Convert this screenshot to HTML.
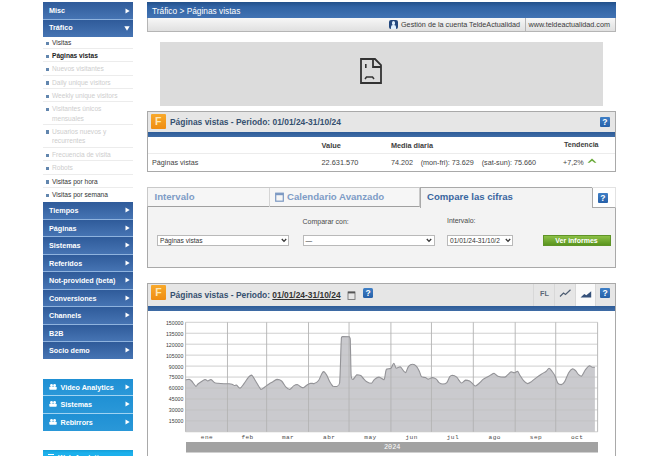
<!DOCTYPE html>
<html><head><meta charset="utf-8">
<style>
*{margin:0;padding:0;box-sizing:border-box}
html,body{width:670px;height:456px;overflow:hidden;background:#fff;font-family:"Liberation Sans",sans-serif;position:relative}
.a{position:absolute}
.t{position:absolute;white-space:nowrap;line-height:1}
/* sidebar */
.mh{position:absolute;left:43px;width:90px;background:linear-gradient(#2f5b9a,#4674b3);color:#fff;font-weight:bold;font-size:7.2px;line-height:1}
.mh span{position:absolute;left:6px;top:50%;transform:translateY(-40%)}
.arr{position:absolute;right:3.5px;top:50%;margin-top:-3px}
.sub{position:absolute;left:43px;width:90px;border-bottom:1px solid #ececec;font-size:6.6px;line-height:9.5px;color:#333}
.sub i{position:absolute;left:2.5px;width:3.5px;height:3.5px;background:#6286ae}
.sub span{position:absolute;left:9px;top:2px;white-space:nowrap}
.sub.d{color:#cdcdcd}
.cy{position:absolute;left:43px;width:90px;background:linear-gradient(#1f90d4,#2a98d8);color:#fff;font-weight:bold;font-size:7.2px;line-height:1}
.yl{left:150px;width:33.3px;text-align:right;font-family:"Liberation Sans",sans-serif;font-size:5.2px;color:#3a3a3a;transform:scaleY(1.2)}
.ml{top:435.3px;width:20px;text-align:center;font-family:"Liberation Mono",monospace;font-size:6.1px;letter-spacing:0.45px;color:#4a4a4a}
.cy span{position:absolute;left:17.5px;top:50%;transform:translateY(-40%)}
</style></head><body>

<!-- SIDEBAR -->
<div class="mh" style="top:2px;height:17px"><span style="transform:translateY(-58%)">Misc</span><svg class="arr" width="5" height="6" viewBox="0 0 5 6"><path d="M0.5 0.5 L4.7 3 L0.5 5.5Z" fill="#fff"/></svg></div>
<div class="a" style="left:43px;top:19px;width:90px;height:1px;background:#8fb3de"></div>
<div class="mh" style="top:20px;height:16.5px"><span style="transform:translateY(-58%)">Tráfico</span><svg class="arr" style="right:3.5px;margin-top:-2.5px" width="6" height="5" viewBox="0 0 6 5"><path d="M0.3 0.3 H5.7 L3 4.7Z" fill="#fff"/></svg></div>

<div class="sub" style="top:36px;height:13px"><i style="top:5.6px"></i><span>Visitas</span></div>
<div class="sub" style="top:49px;height:13px;font-weight:bold;color:#222"><i style="top:5.6px"></i><span>Páginas vistas</span></div>
<div class="sub d" style="top:62px;height:13.5px"><i style="top:5.6px"></i><span>Nuevos visitantes</span></div>
<div class="sub d" style="top:75.5px;height:13.5px"><i style="top:5.6px"></i><span>Daily unique visitors</span></div>
<div class="sub d" style="top:89px;height:13px"><i style="top:5.6px"></i><span>Weekly unique visitors</span></div>
<div class="sub d" style="top:102px;height:22.5px"><i style="top:5.6px"></i><span>Visitantes únicos<br>mensuales</span></div>
<div class="sub d" style="top:124.5px;height:23.5px"><i style="top:5.6px"></i><span>Usuarios nuevos y<br>recurrentes</span></div>
<div class="sub d" style="top:148px;height:13px"><i style="top:5.6px"></i><span>Frecuencia de visita</span></div>
<div class="sub d" style="top:161px;height:13.5px"><i style="top:5.6px"></i><span>Robots</span></div>
<div class="sub" style="top:174.5px;height:13.5px"><i style="top:5.6px"></i><span>Visitas por hora</span></div>
<div class="sub" style="top:188px;height:14px;border-bottom:0"><i style="top:5.6px"></i><span>Visitas por semana</span></div>

<div class="a" style="left:43px;top:202px;width:90px;height:156.6px;background:#8fb3de"></div>
<div class="mh" style="top:202.0px;height:16.5px"><span>Tiempos</span><svg class="arr" width="5" height="6" viewBox="0 0 5 6"><path d="M0.5 0.5 L4.7 3 L0.5 5.5Z" fill="#fff"/></svg></div>
<div class="mh" style="top:219.5px;height:16.5px"><span>Páginas</span><svg class="arr" width="5" height="6" viewBox="0 0 5 6"><path d="M0.5 0.5 L4.7 3 L0.5 5.5Z" fill="#fff"/></svg></div>
<div class="mh" style="top:237.0px;height:16.5px"><span>Sistemas</span><svg class="arr" width="5" height="6" viewBox="0 0 5 6"><path d="M0.5 0.5 L4.7 3 L0.5 5.5Z" fill="#fff"/></svg></div>
<div class="mh" style="top:254.5px;height:16.5px"><span>Referidos</span><svg class="arr" width="5" height="6" viewBox="0 0 5 6"><path d="M0.5 0.5 L4.7 3 L0.5 5.5Z" fill="#fff"/></svg></div>
<div class="mh" style="top:272.0px;height:16.5px"><span>Not-provided (beta)</span><svg class="arr" width="5" height="6" viewBox="0 0 5 6"><path d="M0.5 0.5 L4.7 3 L0.5 5.5Z" fill="#fff"/></svg></div>
<div class="mh" style="top:289.5px;height:16.5px"><span>Conversiones</span><svg class="arr" width="5" height="6" viewBox="0 0 5 6"><path d="M0.5 0.5 L4.7 3 L0.5 5.5Z" fill="#fff"/></svg></div>
<div class="mh" style="top:307.0px;height:16.5px"><span>Channels</span><svg class="arr" width="5" height="6" viewBox="0 0 5 6"><path d="M0.5 0.5 L4.7 3 L0.5 5.5Z" fill="#fff"/></svg></div>
<div class="mh" style="top:324.5px;height:16.5px"><span>B2B</span></div>
<div class="mh" style="top:342.0px;height:16.6px"><span>Socio demo</span><svg class="arr" width="5" height="6" viewBox="0 0 5 6"><path d="M0.5 0.5 L4.7 3 L0.5 5.5Z" fill="#fff"/></svg></div>

<div class="a" style="left:43px;top:378.5px;width:90px;height:52.5px;background:#9fd3f2"></div>
<div class="cy" style="top:378.5px;height:16.5px"><svg style="position:absolute;left:6px;top:50%;margin-top:-3.2px" width="8" height="6" viewBox="0 0 8 6"><circle cx="2.5" cy="1.5" r="1.4" fill="#fff"/><circle cx="5.6" cy="1.5" r="1.4" fill="#fff"/><rect x="0.3" y="2.8" width="7.4" height="3" rx="0.8" fill="#fff"/></svg><span>Video Analytics</span><svg class="arr" width="5" height="6" viewBox="0 0 5 6"><path d="M0.5 0.5 L4.7 3 L0.5 5.5Z" fill="#fff"/></svg></div>
<div class="cy" style="top:396px;height:16.5px"><svg style="position:absolute;left:6px;top:50%;margin-top:-3.2px" width="8" height="6" viewBox="0 0 8 6"><circle cx="2.5" cy="1.5" r="1.4" fill="#fff"/><circle cx="5.6" cy="1.5" r="1.4" fill="#fff"/><rect x="0.3" y="2.8" width="7.4" height="3" rx="0.8" fill="#fff"/></svg><span>Sistemas</span><svg class="arr" width="5" height="6" viewBox="0 0 5 6"><path d="M0.5 0.5 L4.7 3 L0.5 5.5Z" fill="#fff"/></svg></div>
<div class="cy" style="top:413.5px;height:17.5px"><svg style="position:absolute;left:6px;top:50%;margin-top:-3.2px" width="8" height="6" viewBox="0 0 8 6"><circle cx="2.5" cy="1.5" r="1.4" fill="#fff"/><circle cx="5.6" cy="1.5" r="1.4" fill="#fff"/><rect x="0.3" y="2.8" width="7.4" height="3" rx="0.8" fill="#fff"/></svg><span>Rebirrors</span><svg class="arr" width="5" height="6" viewBox="0 0 5 6"><path d="M0.5 0.5 L4.7 3 L0.5 5.5Z" fill="#fff"/></svg></div>
<div class="a" style="left:43px;top:450px;width:90px;height:10px;background:linear-gradient(#159fd8,#1cb0ec 30%)"></div><div class="a" style="left:48px;top:454px;width:6px;height:1.2px;background:#fff"></div><div class="t" style="left:58px;top:454.3px;font-size:7.2px;font-weight:bold;color:#fff">Web Analytics</div>


<!-- MAIN HEADER -->
<div class="a" style="left:147px;top:2px;width:469px;height:16px;background:linear-gradient(#22508a 0%,#3163a4 30%,#4273b3 100%)"></div>
<div class="t" style="left:152px;top:6.8px;font-size:8.34px;color:#fff">Tráfico &gt; Páginas vistas</div>
<div class="a" style="left:147px;top:18px;width:469px;height:14px;background:linear-gradient(#f7f7f7,#e0e0e0);border:1px solid #b5b5b5;border-top:0"></div>
<div class="a" style="left:388.5px;top:20px;width:9.5px;height:9px;background:#23487f;border-radius:2px"></div>
<div class="a" style="left:391.5px;top:21px;width:3.5px;height:3.5px;background:#dff0ff;border-radius:50%"></div>
<div class="a" style="left:390.5px;top:24.5px;width:5.5px;height:4.5px;background:#dff0ff;border-radius:2px 2px 0 0"></div>
<div class="t" style="left:401px;top:21.3px;font-size:7.22px;color:#3a3a3a">Gestión de la cuenta TeldeActualidad</div>
<div class="a" style="left:525px;top:18px;width:1px;height:14px;background:#b5b5b5"></div>
<div class="t" style="left:528.5px;top:21.3px;font-size:7.22px;color:#3a3a3a">www.teldeactualidad.com</div>

<!-- PLACEHOLDER -->
<div class="a" style="left:160px;top:41.5px;width:443px;height:64px;background:#dcdcdc"></div>
<svg class="a" style="left:355px;top:54px" width="32" height="34" viewBox="0 0 32 34">
<path d="M6 5 H20 L26 11 V29 H6 Z" fill="none" stroke="#333" stroke-width="1.8"/>
<path d="M18 5 V13 H26" fill="none" stroke="#333" stroke-width="1.8"/>
<rect x="10" y="10" width="1.6" height="4" fill="#333"/>
<path d="M10 25 L11.5 23 H17.5 L19 25" fill="none" stroke="#333" stroke-width="1.5"/>
</svg>


<!-- SUMMARY BOX -->
<div class="a" style="left:147px;top:111px;width:469px;height:61px;border:1px solid #a9a9a9;background:#fff"></div>
<div class="a" style="left:148px;top:112px;width:467px;height:20px;background:#e6e6e6"></div>
<div class="a" style="left:148px;top:132px;width:467px;height:4.5px;background:linear-gradient(#2e5c98,#3f6ca6)"></div>
<div class="a" style="left:150.5px;top:113.5px;width:15.5px;height:15px;background:linear-gradient(#f8a92c,#ef8d12);border-radius:1px"></div>
<div class="t" style="left:155px;top:116px;font-size:10.5px;font-weight:bold;color:#ffe7b5">F</div>
<div class="t" style="left:170px;top:117.5px;font-size:8.43px;font-weight:bold;color:#35506f">Páginas vistas - Periodo: 01/01/24-31/10/24</div>
<div class="a" style="left:600px;top:116.5px;width:10px;height:10px;background:linear-gradient(#3f7fc6,#2660a8);border-radius:1px"></div>
<div class="t" style="left:602.3px;top:117.6px;font-size:8.5px;font-weight:bold;color:#fff">?</div>
<div class="t" style="left:321.5px;top:141.8px;font-size:7.4px;font-weight:bold;color:#3d3d3d">Value</div>
<div class="t" style="left:391px;top:141.6px;font-size:7.27px;font-weight:bold;color:#3d3d3d">Media diaria</div>
<div class="t" style="left:564px;top:142px;font-size:7.1px;font-weight:bold;color:#3d3d3d">Tendencia</div>
<div class="a" style="left:148px;top:153px;width:467px;height:1px;background:#ececec"></div>
<div class="t" style="left:152px;top:159.2px;font-size:7.2px;color:#444">Páginas vistas</div>
<div class="t" style="left:321.5px;top:159.2px;font-size:7.37px;color:#444">22.631.570</div>
<div class="t" style="left:391px;top:159.2px;font-size:7.2px;color:#444">74.202</div>
<div class="t" style="left:420.7px;top:159.2px;font-size:7.2px;color:#444">(mon-fri): 73.629</div>
<div class="t" style="left:481.7px;top:159.2px;font-size:7.2px;color:#444">(sat-sun): 75.660</div>
<div class="t" style="left:563px;top:159.2px;font-size:7.2px;color:#444">+7,2%</div>
<svg class="a" style="left:586.5px;top:158.3px" width="10" height="5" viewBox="0 0 10 5"><path d="M0.5 4.8 L5 0.6 L9.5 4.8 L7.5 4.8 L5 2.8 L2.5 4.8Z" fill="#6bab3c"/></svg>

<!-- TABS BOX -->
<div class="a" style="left:147px;top:207px;width:469px;height:61px;border:1px solid #a9a9a9;border-top:0;background:#f3f3f3"></div>
<div class="a" style="left:147px;top:187px;width:273px;height:20px;border:1px solid #c9c9c9;border-bottom:1px solid #a0a0a0;background:#f6f6f6"></div>
<div class="a" style="left:268.5px;top:188px;width:1px;height:19px;background:#d5d5d5"></div>
<div class="t" style="left:154.5px;top:191.8px;font-size:9.6px;font-weight:bold;color:#7e9cc6">Intervalo</div>
<svg class="a" style="left:274.5px;top:191.5px" width="9" height="10" viewBox="0 0 9 10"><rect x="0.7" y="1.2" width="7.6" height="8" fill="none" stroke="#7b98c2" stroke-width="1.2"/><rect x="0.7" y="1.2" width="7.6" height="2" fill="#7b98c2"/></svg>
<div class="t" style="left:287px;top:191.8px;font-size:9.64px;font-weight:bold;color:#7e9cc6">Calendario Avanzado</div>
<div class="a" style="left:420px;top:187px;width:173px;height:21px;border:1px solid #a9a9a9;border-bottom:0;background:#f3f3f3"></div>
<div class="t" style="left:427px;top:191.8px;font-size:9.6px;font-weight:bold;color:#3a66a0">Compare las cifras</div>
<div class="a" style="left:592px;top:187px;width:24px;height:21px;border:1px solid #e2e2e2;border-left:0;border-bottom:1px solid #a9a9a9"></div>
<div class="a" style="left:598px;top:192.8px;width:10px;height:10px;background:linear-gradient(#3f7fc6,#2660a8);border-radius:1px"></div>
<div class="t" style="left:600.3px;top:193.5px;font-size:8.5px;font-weight:bold;color:#fff">?</div>
<div class="t" style="left:302.5px;top:218.1px;font-size:7px;color:#4a4a4a">Comparar con:</div>
<div class="t" style="left:447px;top:218.1px;font-size:6.93px;color:#4a4a4a">Intervalo:</div>
<div class="a sel" style="left:157px;top:235px;width:132px;height:11px;border:1px solid #b9b9b9;background:#fff"></div>
<div class="t" style="left:160px;top:237.5px;font-size:6.6px;color:#333">Páginas vistas</div>
<div class="a sel" style="left:302.5px;top:235px;width:132px;height:11px;border:1px solid #b9b9b9;background:#fff"></div>
<div class="t" style="left:305.5px;top:237.5px;font-size:6.6px;color:#333">—</div>
<div class="a sel" style="left:447px;top:235px;width:66px;height:11px;border:1px solid #b9b9b9;background:#fff"></div>
<div class="t" style="left:450px;top:237.5px;font-size:6.6px;color:#333">01/01/24-31/10/2</div>
<svg class="a" style="left:281px;top:238px" width="6" height="5" viewBox="0 0 6 5"><path d="M0.8 1 L3 3.4 L5.2 1" fill="none" stroke="#333" stroke-width="1.3"/></svg>
<svg class="a" style="left:426px;top:238px" width="6" height="5" viewBox="0 0 6 5"><path d="M0.8 1 L3 3.4 L5.2 1" fill="none" stroke="#333" stroke-width="1.3"/></svg>
<svg class="a" style="left:505px;top:238px" width="6" height="5" viewBox="0 0 6 5"><path d="M0.8 1 L3 3.4 L5.2 1" fill="none" stroke="#333" stroke-width="1.3"/></svg>
<div class="a" style="left:542.5px;top:235px;width:68.5px;height:11px;background:linear-gradient(#8cc046,#5a951f);border:1px solid #5f9428"></div>
<div class="t" style="left:542px;top:237px;width:69px;text-align:center;font-size:7px;font-weight:bold;color:#fff">Ver informes</div>


<!-- CHART BOX -->
<div class="a" style="left:147px;top:282.5px;width:469px;height:200px;border:1px solid #a9a9a9;background:#fff"></div>
<div class="a" style="left:148px;top:283.5px;width:467px;height:22.5px;background:#e6e6e6"></div>
<div class="a" style="left:148px;top:306px;width:467px;height:4.5px;background:linear-gradient(#2e5c98,#3f6ca6)"></div>
<div class="a" style="left:150.6px;top:285.2px;width:15.5px;height:15px;background:linear-gradient(#f8a92c,#ef8d12);border-radius:1px"></div>
<div class="t" style="left:155.2px;top:287.3px;font-size:10.5px;font-weight:bold;color:#ffe7b5">F</div>
<div class="t" style="left:170px;top:291px;font-size:8.42px;font-weight:bold;color:#35506f">Páginas vistas - Periodo: <span style="color:#333;text-decoration:underline">01/01/24-31/10/24</span></div>
<svg class="a" style="left:346.5px;top:290.5px" width="9" height="9" viewBox="0 0 9 9"><rect x="1" y="1" width="7" height="7.5" fill="none" stroke="#777" stroke-width="0.9"/><rect x="1" y="0.6" width="7" height="1.8" fill="#555"/></svg>
<div class="a" style="left:363.2px;top:288.3px;width:9.8px;height:9.8px;background:linear-gradient(#3f7fc6,#2660a8);border-radius:1.5px"></div>
<div class="t" style="left:365.4px;top:289.3px;font-size:8.5px;font-weight:bold;color:#fff">?</div>
<div class="a" style="left:533px;top:283.5px;width:1px;height:22.5px;background:#d8d8d8"></div>
<div class="a" style="left:554px;top:283.5px;width:1px;height:22.5px;background:#d8d8d8"></div>
<div class="a" style="left:574.5px;top:283.5px;width:21px;height:22.5px;background:#fafafa;border-left:1px solid #d8d8d8;border-right:1px solid #d8d8d8"></div>
<div class="t" style="left:540px;top:289.5px;font-size:7.28px;font-weight:bold;color:#5a6878">FL</div>
<svg class="a" style="left:559px;top:289px" width="13" height="9" viewBox="0 0 13 9"><path d="M1 7.5 L4.5 4 L6.5 5.5 L11.5 0.8" fill="none" stroke="#4d5d72" stroke-width="1.2"/></svg>
<svg class="a" style="left:579.5px;top:290.5px" width="12" height="7" viewBox="0 0 12 7"><path d="M0.5 6.5 L4.3 3 L6.3 4.3 L11.2 0.2 V6.5 Z" fill="#34507a"/></svg>
<div class="a" style="left:600px;top:288px;width:10px;height:10px;background:linear-gradient(#3f7fc6,#2660a8);border-radius:1px"></div>
<div class="t" style="left:602.4px;top:289.1px;font-size:8.5px;font-weight:bold;color:#fff">?</div>

<!--CHART-START-->
<svg class="a" style="left:0;top:0" width="670" height="456" viewBox="0 0 670 456">
<path d="M185.60,380.00 C186.17,379.87 188.00,379.20 189.00,379.20 C190.00,379.37 190.43,379.80 191.60,381.00 C192.77,382.20 194.93,385.90 196.00,386.40 C197.07,386.40 196.50,385.15 198.00,384.00 C199.50,382.85 203.37,380.00 205.00,379.50 C206.63,379.50 206.82,381.00 207.80,381.00 C208.78,381.00 209.72,379.50 210.90,379.50 C212.08,379.80 213.72,382.17 214.90,382.80 C216.08,383.30 216.50,383.15 218.00,383.30 C219.50,383.45 222.07,383.62 223.90,383.70 C225.73,383.78 227.65,383.72 229.00,383.80 C230.35,383.88 231.08,383.92 232.00,384.20 C232.92,384.48 233.75,385.37 234.50,385.50 C235.25,385.50 235.58,385.00 236.50,385.00 C237.42,385.45 238.75,388.20 240.00,388.20 C241.25,387.97 242.60,385.40 244.00,383.60 C245.40,381.80 247.13,378.82 248.40,377.40 C249.67,375.98 250.40,375.10 251.60,375.10 C252.80,375.70 254.03,378.60 255.60,381.00 C257.17,383.40 259.52,388.47 261.00,389.50 C262.48,389.50 263.17,388.12 264.50,387.20 C265.83,386.28 267.65,384.88 269.00,384.00 C270.35,383.12 271.27,382.67 272.60,381.90 C273.93,381.13 275.50,379.55 277.00,379.40 C278.50,379.40 280.10,379.70 281.60,381.00 C283.10,382.30 284.67,385.78 286.00,387.20 C287.33,388.62 288.33,389.50 289.60,389.50 C290.87,389.28 292.33,386.73 293.60,385.90 C294.87,385.07 296.02,384.50 297.20,384.50 C298.38,384.65 299.67,386.27 300.70,386.80 C301.73,387.33 302.35,387.70 303.40,387.70 C304.45,387.40 305.80,385.75 307.00,385.00 C308.20,384.25 309.40,383.43 310.60,383.20 C311.80,383.20 312.87,383.60 314.20,383.60 C315.53,383.15 317.42,381.98 318.60,380.50 C319.78,379.02 320.47,376.18 321.30,374.70 C322.13,373.22 322.70,371.60 323.60,371.60 C324.50,371.67 325.73,373.53 326.70,375.10 C327.67,376.67 328.35,379.13 329.40,381.00 C330.45,382.87 331.80,385.38 333.00,386.30 C334.20,386.50 335.50,386.50 336.60,386.50 C337.70,385.95 338.83,386.50 339.60,383.00 C340.37,375.58 340.75,349.73 341.20,342.00 C341.65,336.60 340.92,337.47 342.30,336.60 C343.68,336.60 348.15,336.60 349.50,336.80 C350.85,338.37 350.12,339.47 350.40,346.00 C350.68,352.53 350.77,370.43 351.20,376.00 C351.63,379.40 352.07,379.40 353.00,379.40 C353.93,379.20 355.52,375.43 356.80,374.80 C358.08,374.80 359.67,375.07 360.70,375.60 C361.73,376.13 361.98,376.98 363.00,378.00 C364.02,379.02 365.40,380.82 366.80,381.70 C368.20,382.58 370.12,383.30 371.40,383.30 C372.68,382.92 373.23,380.43 374.50,379.40 C375.77,378.37 377.42,377.10 379.00,377.10 C380.58,377.13 382.77,379.60 384.00,379.60 C385.23,378.28 385.25,371.08 386.40,369.20 C387.55,368.30 389.67,369.20 390.90,368.30 C392.13,367.32 392.90,363.30 393.80,363.30 C394.70,363.30 395.23,367.72 396.30,368.30 C397.37,368.30 398.97,366.80 400.20,366.80 C401.43,367.28 402.78,370.22 403.70,371.20 C404.62,372.18 404.88,372.70 405.70,372.70 C406.52,371.88 407.45,367.70 408.60,366.30 C409.75,364.90 411.28,364.30 412.60,364.30 C413.92,364.30 415.35,365.07 416.50,366.30 C417.65,367.53 418.67,369.97 419.50,371.70 C420.33,373.43 420.52,375.72 421.50,376.70 C422.48,377.60 424.25,377.20 425.40,377.60 C426.55,378.00 427.25,379.10 428.40,379.10 C429.55,379.10 430.98,377.60 432.30,377.60 C433.62,377.60 435.18,378.27 436.30,379.10 C437.42,379.93 437.90,381.78 439.00,382.60 C440.10,383.42 441.60,384.00 442.90,384.00 C444.20,384.00 445.65,383.82 446.80,382.60 C447.95,381.38 448.88,377.93 449.80,376.70 C450.72,375.47 451.15,375.20 452.30,375.20 C453.45,375.27 455.55,376.20 456.70,377.10 C457.85,378.00 458.37,379.62 459.20,380.60 C460.03,381.58 460.63,383.00 461.70,383.00 C462.77,382.92 464.28,380.42 465.60,380.10 C466.92,380.10 468.45,380.52 469.60,381.10 C470.75,381.68 471.52,382.78 472.50,383.60 C473.48,384.42 474.35,386.00 475.50,386.00 C476.65,385.90 478.08,384.15 479.40,383.00 C480.72,381.85 482.08,380.08 483.40,379.10 C484.72,378.12 485.98,377.83 487.30,377.10 C488.62,376.37 490.18,375.35 491.30,374.70 C492.42,374.05 492.90,373.20 494.00,373.20 C495.10,373.45 496.10,375.55 497.90,376.20 C499.70,376.85 503.15,377.10 504.80,377.10 C506.45,376.85 506.73,375.60 507.80,374.70 C508.87,373.80 510.13,372.03 511.20,371.70 C512.27,371.70 513.13,372.70 514.20,372.70 C515.27,372.62 516.70,371.20 517.60,371.20 C518.50,371.53 518.60,373.13 519.60,374.70 C520.60,376.27 522.28,379.12 523.60,380.60 C524.92,382.08 526.18,383.43 527.50,383.60 C528.82,383.60 530.02,382.60 531.50,381.60 C532.98,380.60 534.77,378.83 536.40,377.60 C538.03,376.37 539.65,375.27 541.30,374.20 C542.95,373.13 545.02,372.18 546.30,371.20 C547.58,370.22 548.07,368.30 549.00,368.30 C549.93,368.30 550.92,369.97 551.90,371.20 C552.88,372.43 553.92,373.72 554.90,375.70 C555.88,377.68 556.73,381.62 557.80,383.10 C558.87,384.58 560.15,384.60 561.30,384.60 C562.45,384.35 563.47,383.58 564.70,381.60 C565.93,379.62 567.38,374.83 568.70,372.70 C570.02,370.57 571.45,369.13 572.60,368.80 C573.75,368.80 574.60,369.72 575.60,370.70 C576.60,371.68 577.62,373.78 578.60,374.70 C579.58,375.62 580.35,376.20 581.50,376.20 C582.65,375.37 584.18,371.43 585.50,369.70 C586.82,367.97 588.25,366.20 589.40,365.80 C590.55,365.80 591.48,367.05 592.40,367.30 C593.32,367.30 594.48,367.30 594.90,367.30 L594.9,431.8 L185.6,431.8 Z" fill="#cacace"/>
<g stroke="#c2c2c2" stroke-width="0.9" opacity="0.85"><line x1="185.6" y1="322.30" x2="597.6" y2="322.30"/><line x1="185.6" y1="333.25" x2="597.6" y2="333.25"/><line x1="185.6" y1="344.20" x2="597.6" y2="344.20"/><line x1="185.6" y1="355.15" x2="597.6" y2="355.15"/><line x1="185.6" y1="366.10" x2="597.6" y2="366.10"/><line x1="185.6" y1="377.05" x2="597.6" y2="377.05"/><line x1="185.6" y1="388.00" x2="597.6" y2="388.00"/><line x1="185.6" y1="398.95" x2="597.6" y2="398.95"/><line x1="185.6" y1="409.90" x2="597.6" y2="409.90"/><line x1="185.6" y1="420.85" x2="597.6" y2="420.85"/><line x1="185.6" y1="431.80" x2="597.6" y2="431.80"/></g>
<g stroke="#b4b4b4" stroke-width="1" opacity="0.9"><line x1="185.60" y1="322.3" x2="185.60" y2="431.8"/><line x1="227.48" y1="322.3" x2="227.48" y2="431.8"/><line x1="266.65" y1="322.3" x2="266.65" y2="431.8"/><line x1="308.52" y1="322.3" x2="308.52" y2="431.8"/><line x1="349.05" y1="322.3" x2="349.05" y2="431.8"/><line x1="390.92" y1="322.3" x2="390.92" y2="431.8"/><line x1="431.45" y1="322.3" x2="431.45" y2="431.8"/><line x1="473.32" y1="322.3" x2="473.32" y2="431.8"/><line x1="515.20" y1="322.3" x2="515.20" y2="431.8"/><line x1="555.72" y1="322.3" x2="555.72" y2="431.8"/><line x1="597.60" y1="322.3" x2="597.60" y2="431.8"/></g>
<path d="M185.60,380.00 C186.17,379.87 188.00,379.20 189.00,379.20 C190.00,379.37 190.43,379.80 191.60,381.00 C192.77,382.20 194.93,385.90 196.00,386.40 C197.07,386.40 196.50,385.15 198.00,384.00 C199.50,382.85 203.37,380.00 205.00,379.50 C206.63,379.50 206.82,381.00 207.80,381.00 C208.78,381.00 209.72,379.50 210.90,379.50 C212.08,379.80 213.72,382.17 214.90,382.80 C216.08,383.30 216.50,383.15 218.00,383.30 C219.50,383.45 222.07,383.62 223.90,383.70 C225.73,383.78 227.65,383.72 229.00,383.80 C230.35,383.88 231.08,383.92 232.00,384.20 C232.92,384.48 233.75,385.37 234.50,385.50 C235.25,385.50 235.58,385.00 236.50,385.00 C237.42,385.45 238.75,388.20 240.00,388.20 C241.25,387.97 242.60,385.40 244.00,383.60 C245.40,381.80 247.13,378.82 248.40,377.40 C249.67,375.98 250.40,375.10 251.60,375.10 C252.80,375.70 254.03,378.60 255.60,381.00 C257.17,383.40 259.52,388.47 261.00,389.50 C262.48,389.50 263.17,388.12 264.50,387.20 C265.83,386.28 267.65,384.88 269.00,384.00 C270.35,383.12 271.27,382.67 272.60,381.90 C273.93,381.13 275.50,379.55 277.00,379.40 C278.50,379.40 280.10,379.70 281.60,381.00 C283.10,382.30 284.67,385.78 286.00,387.20 C287.33,388.62 288.33,389.50 289.60,389.50 C290.87,389.28 292.33,386.73 293.60,385.90 C294.87,385.07 296.02,384.50 297.20,384.50 C298.38,384.65 299.67,386.27 300.70,386.80 C301.73,387.33 302.35,387.70 303.40,387.70 C304.45,387.40 305.80,385.75 307.00,385.00 C308.20,384.25 309.40,383.43 310.60,383.20 C311.80,383.20 312.87,383.60 314.20,383.60 C315.53,383.15 317.42,381.98 318.60,380.50 C319.78,379.02 320.47,376.18 321.30,374.70 C322.13,373.22 322.70,371.60 323.60,371.60 C324.50,371.67 325.73,373.53 326.70,375.10 C327.67,376.67 328.35,379.13 329.40,381.00 C330.45,382.87 331.80,385.38 333.00,386.30 C334.20,386.50 335.50,386.50 336.60,386.50 C337.70,385.95 338.83,386.50 339.60,383.00 C340.37,375.58 340.75,349.73 341.20,342.00 C341.65,336.60 340.92,337.47 342.30,336.60 C343.68,336.60 348.15,336.60 349.50,336.80 C350.85,338.37 350.12,339.47 350.40,346.00 C350.68,352.53 350.77,370.43 351.20,376.00 C351.63,379.40 352.07,379.40 353.00,379.40 C353.93,379.20 355.52,375.43 356.80,374.80 C358.08,374.80 359.67,375.07 360.70,375.60 C361.73,376.13 361.98,376.98 363.00,378.00 C364.02,379.02 365.40,380.82 366.80,381.70 C368.20,382.58 370.12,383.30 371.40,383.30 C372.68,382.92 373.23,380.43 374.50,379.40 C375.77,378.37 377.42,377.10 379.00,377.10 C380.58,377.13 382.77,379.60 384.00,379.60 C385.23,378.28 385.25,371.08 386.40,369.20 C387.55,368.30 389.67,369.20 390.90,368.30 C392.13,367.32 392.90,363.30 393.80,363.30 C394.70,363.30 395.23,367.72 396.30,368.30 C397.37,368.30 398.97,366.80 400.20,366.80 C401.43,367.28 402.78,370.22 403.70,371.20 C404.62,372.18 404.88,372.70 405.70,372.70 C406.52,371.88 407.45,367.70 408.60,366.30 C409.75,364.90 411.28,364.30 412.60,364.30 C413.92,364.30 415.35,365.07 416.50,366.30 C417.65,367.53 418.67,369.97 419.50,371.70 C420.33,373.43 420.52,375.72 421.50,376.70 C422.48,377.60 424.25,377.20 425.40,377.60 C426.55,378.00 427.25,379.10 428.40,379.10 C429.55,379.10 430.98,377.60 432.30,377.60 C433.62,377.60 435.18,378.27 436.30,379.10 C437.42,379.93 437.90,381.78 439.00,382.60 C440.10,383.42 441.60,384.00 442.90,384.00 C444.20,384.00 445.65,383.82 446.80,382.60 C447.95,381.38 448.88,377.93 449.80,376.70 C450.72,375.47 451.15,375.20 452.30,375.20 C453.45,375.27 455.55,376.20 456.70,377.10 C457.85,378.00 458.37,379.62 459.20,380.60 C460.03,381.58 460.63,383.00 461.70,383.00 C462.77,382.92 464.28,380.42 465.60,380.10 C466.92,380.10 468.45,380.52 469.60,381.10 C470.75,381.68 471.52,382.78 472.50,383.60 C473.48,384.42 474.35,386.00 475.50,386.00 C476.65,385.90 478.08,384.15 479.40,383.00 C480.72,381.85 482.08,380.08 483.40,379.10 C484.72,378.12 485.98,377.83 487.30,377.10 C488.62,376.37 490.18,375.35 491.30,374.70 C492.42,374.05 492.90,373.20 494.00,373.20 C495.10,373.45 496.10,375.55 497.90,376.20 C499.70,376.85 503.15,377.10 504.80,377.10 C506.45,376.85 506.73,375.60 507.80,374.70 C508.87,373.80 510.13,372.03 511.20,371.70 C512.27,371.70 513.13,372.70 514.20,372.70 C515.27,372.62 516.70,371.20 517.60,371.20 C518.50,371.53 518.60,373.13 519.60,374.70 C520.60,376.27 522.28,379.12 523.60,380.60 C524.92,382.08 526.18,383.43 527.50,383.60 C528.82,383.60 530.02,382.60 531.50,381.60 C532.98,380.60 534.77,378.83 536.40,377.60 C538.03,376.37 539.65,375.27 541.30,374.20 C542.95,373.13 545.02,372.18 546.30,371.20 C547.58,370.22 548.07,368.30 549.00,368.30 C549.93,368.30 550.92,369.97 551.90,371.20 C552.88,372.43 553.92,373.72 554.90,375.70 C555.88,377.68 556.73,381.62 557.80,383.10 C558.87,384.58 560.15,384.60 561.30,384.60 C562.45,384.35 563.47,383.58 564.70,381.60 C565.93,379.62 567.38,374.83 568.70,372.70 C570.02,370.57 571.45,369.13 572.60,368.80 C573.75,368.80 574.60,369.72 575.60,370.70 C576.60,371.68 577.62,373.78 578.60,374.70 C579.58,375.62 580.35,376.20 581.50,376.20 C582.65,375.37 584.18,371.43 585.50,369.70 C586.82,367.97 588.25,366.20 589.40,365.80 C590.55,365.80 591.48,367.05 592.40,367.30 C593.32,367.30 594.48,367.30 594.90,367.30" fill="none" stroke="#939397" stroke-width="1.1" stroke-linejoin="round"/>
<rect x="186" y="442" width="412" height="10.5" fill="#a2a2a2"/>
</svg>
<div class="t yl" style="top:320.70px">150000</div><div class="t yl" style="top:331.65px">135000</div><div class="t yl" style="top:342.60px">120000</div><div class="t yl" style="top:353.55px">105000</div><div class="t yl" style="top:364.50px">90000</div><div class="t yl" style="top:375.45px">75000</div><div class="t yl" style="top:386.40px">60000</div><div class="t yl" style="top:397.35px">45000</div><div class="t yl" style="top:408.30px">30000</div><div class="t yl" style="top:419.25px">15000</div>
<div class="t ml" style="left:197.04px">ene</div><div class="t ml" style="left:237.56px">feb</div><div class="t ml" style="left:278.09px">mar</div><div class="t ml" style="left:319.29px">abr</div><div class="t ml" style="left:360.49px">may</div><div class="t ml" style="left:401.69px">jun</div><div class="t ml" style="left:442.89px">jul</div><div class="t ml" style="left:484.76px">ago</div><div class="t ml" style="left:525.96px">sep</div><div class="t ml" style="left:567.16px">oct</div>
<div class="t" style="left:384px;top:444px;font-family:'Liberation Mono',monospace;font-size:6.83px;color:#fff">2024</div>
<!--CHART-END-->

</body></html>
